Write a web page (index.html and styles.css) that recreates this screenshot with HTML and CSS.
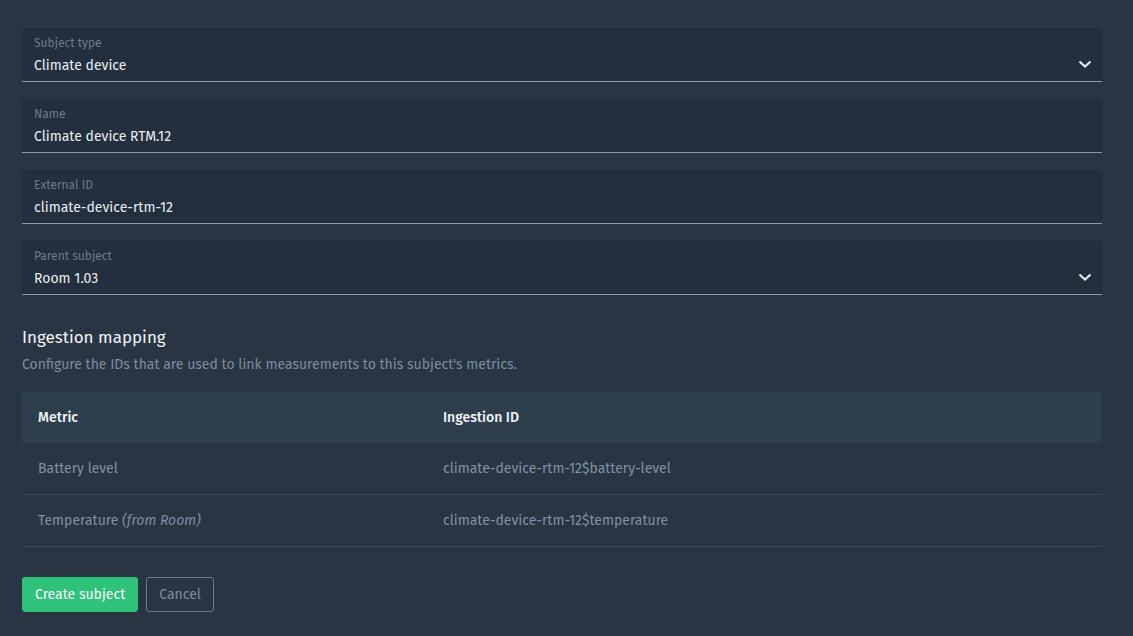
FILE: index.html
```html
<!DOCTYPE html>
<html lang="en">
<head>
  <meta charset="UTF-8">
  <title>New subject</title>
  <link rel="stylesheet" href="styles.css">
</head>
<body>
  <main class="page">
    <form class="subject-form">
      <div class="field select">
        <label>Subject type</label>
        <div class="value">Climate device</div>
        <svg class="chevron" width="14" height="14" viewBox="0 0 14 14"><path d="M1.5 4.5l5.5 5 5.5-5" fill="none" stroke="currentColor" stroke-width="2.2"/></svg>
      </div>
      <div class="field">
        <label>Name</label>
        <div class="value">Climate device RTM.12</div>
      </div>
      <div class="field">
        <label>External ID</label>
        <div class="value">climate-device-rtm-12</div>
      </div>
      <div class="field select">
        <label>Parent subject</label>
        <div class="value">Room 1.03</div>
        <svg class="chevron" width="14" height="14" viewBox="0 0 14 14"><path d="M1.5 4.5l5.5 5 5.5-5" fill="none" stroke="currentColor" stroke-width="2.2"/></svg>
      </div>

      <section class="mapping">
        <h2>Ingestion mapping</h2>
        <p>Configure the IDs that are used to link measurements to this subject's metrics.</p>
        <table class="mapping-table">
          <thead>
            <tr><th>Metric</th><th>Ingestion ID</th></tr>
          </thead>
          <tbody>
            <tr><td>Battery level</td><td>climate-device-rtm-12$battery-level</td></tr>
            <tr><td>Temperature <i>(from Room)</i></td><td>climate-device-rtm-12$temperature</td></tr>
          </tbody>
        </table>
      </section>

      <div class="actions">
        <button type="button" class="btn primary">Create subject</button>
        <button type="button" class="btn outline">Cancel</button>
      </div>
    </form>
  </main>
</body>
</html>
```
FILE: styles.css
```css
* {
  margin: 0;
  box-sizing: border-box;
}
body {
  background-color: #2a3544;
  font-family: "Fira Sans", "Noto Sans", sans-serif;
  color: #e6ebf0;
}
.page {
  padding: 28px 31px 0 22px;
}
.subject-form {
  display: flex;
  flex-direction: column;
  gap: 17px;
}
.field {
  position: relative;
  background-color: #232f3d;
  border-radius: 4px 4px 0 0;
  border-bottom: 1px solid #8a98ac;
  padding: 7px 12px 5px;
  height: 54px;
}
.field label {
  display: block;
  font-size: 12px;
  line-height: 16px;
  color: #6c7a8c;
}
.field .value {
  margin-top: 5px;
  font-size: 14px;
  line-height: 20px;
  color: #e8edf2;
}
.field .chevron {
  position: absolute;
  right: 10px;
  top: 29px;
  color: #e6ebf0;
}
.mapping {
  padding-top: 15px;
}
.mapping h2 {
  font-size: 17px;
  font-weight: 400;
  line-height: 22px;
  color: #f2f5f8;
}
.mapping p {
  margin-top: 6px;
  font-size: 14px;
  line-height: 20px;
  color: #7d8ca0;
}
.mapping-table {
  margin-top: 17px;
  width: 100%;
  border-collapse: collapse;
  font-size: 14px;
}
.mapping-table th {
  text-align: left;
  font-weight: 500;
  color: #f2f5f8;
  background-color: #2f3e4c;
  height: 51px;
  padding: 0 16px;
}
.mapping-table th:first-child,
.mapping-table td:first-child {
  width: 405px;
}
.mapping-table td {
  height: 51px;
  padding: 0 16px;
  color: #8190a3;
  border-bottom: 1px solid #3d4958;
}
.mapping-table tr:last-child td {
  height: 52px;
}
.mapping-table td i {
  color: #7d8ca0;
}
.actions {
  display: flex;
  gap: 8px;
  margin-top: 13px;
}
.btn {
  appearance: none;
  font-family: inherit;
  font-size: 14px;
  height: 35px;
  border-radius: 3px;
  padding: 0 12px;
  cursor: pointer;
}
.btn.primary {
  background-color: #2ec27a;
  border: 1px solid #2ec27a;
  color: #ffffff;
}
.btn.outline {
  background: none;
  border: 1px solid #6c7a8c;
  color: #7d8ca0;
}
```
